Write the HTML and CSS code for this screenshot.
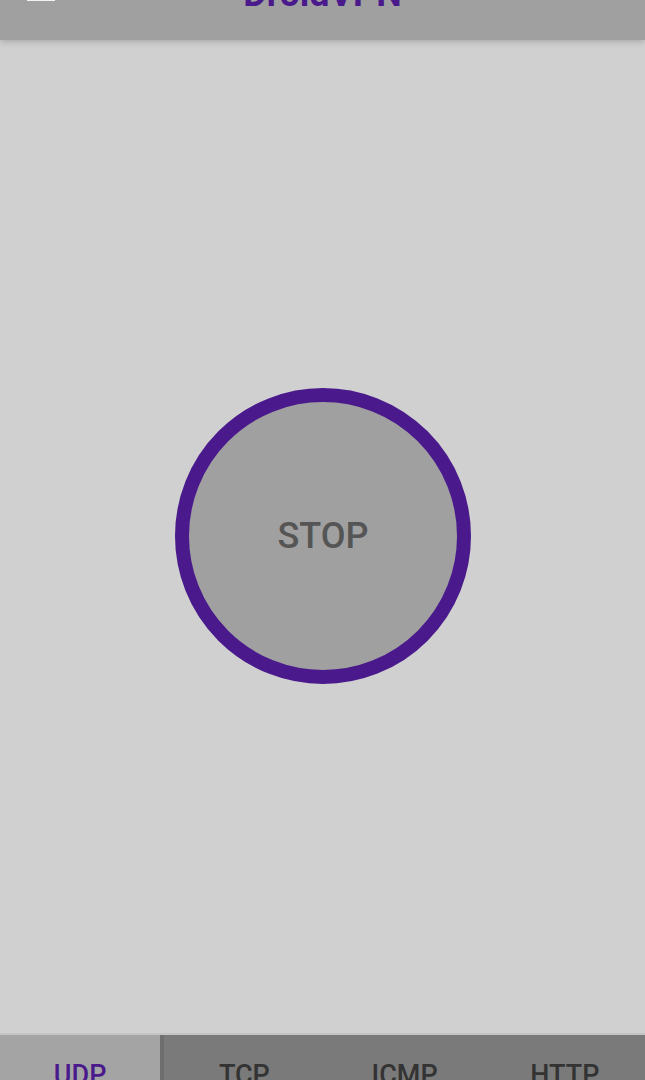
FILE: index.html
```html
<!DOCTYPE html>
<html lang="en">
<head>
    <meta charset="UTF-8">
    <meta name="viewport" content="width=device-width, initial-scale=1.0">
    <title>DroidVPN</title>
    <link rel="stylesheet" href="styles.css">
</head>
<body>

    <div class="app">
        <div class="toolbar">
            <div class="menu-icon"></div>
            <h1 class="title">DroidVPN</h1>
        </div>

        <div class="main">
            <button type="button" class="stop-btn">STOP</button>
        </div>

        <div class="tabs">
            <div class="tab active">UDP</div>
            <div class="tab">TCP</div>
            <div class="tab">ICMP</div>
            <div class="tab">HTTP</div>
        </div>
    </div>

</body>
</html>
```

FILE: styles.css
```css
html, body {
    margin: 0;
    padding: 0;
    height: 100%;
    overflow: hidden;
}
body {
    font-family: Roboto, "Liberation Sans", sans-serif;
    background-color: #d0d0d0;
}
.app {
    display: flex;
    flex-direction: column;
    height: 1080px;
}
.toolbar {
    position: relative;
    height: 40px;
    background-color: #a0a0a0;
    box-shadow: 0 2px 6px rgba(0, 0, 0, 0.18);
    overflow: hidden;
    z-index: 1;
}
.menu-icon {
    position: absolute;
    left: 27px;
    top: -1px;
    width: 28px;
    height: 2px;
    background: #f2f2f2;
}
.title {
    margin: -24px 0 0;
    text-align: center;
    font-size: 36px;
    line-height: 36px;
    font-weight: bold;
    color: #4a1a8c;
}
.main {
    flex: 1;
    display: flex;
    align-items: center;
    justify-content: center;
    padding-bottom: 2px;
}
.stop-btn {
    width: 296px;
    height: 296px;
    border-radius: 50%;
    border: 14px solid #4a1a8c;
    background-color: #a0a0a0;
    color: #555;
    font-family: Roboto, "Liberation Sans", sans-serif;
    font-size: 36px;
    font-weight: 500;
    padding: 0;
    cursor: pointer;
    margin-left: 1px;
}
.tabs {
    display: flex;
    height: 45px;
    border-top: 2px solid #c4c4c4;
    background-color: #7a7a7a;
    overflow: hidden;
}
.tab {
    flex: 1;
    text-align: center;
    font-size: 27px;
    font-weight: 500;
    color: #333;
    padding-top: 27px;
    line-height: 26px;
}
.tab.active {
    background-color: #a4a4a4;
    color: #4a1a8c;
    border-right: 4px solid #6e6e6e;
}
```
